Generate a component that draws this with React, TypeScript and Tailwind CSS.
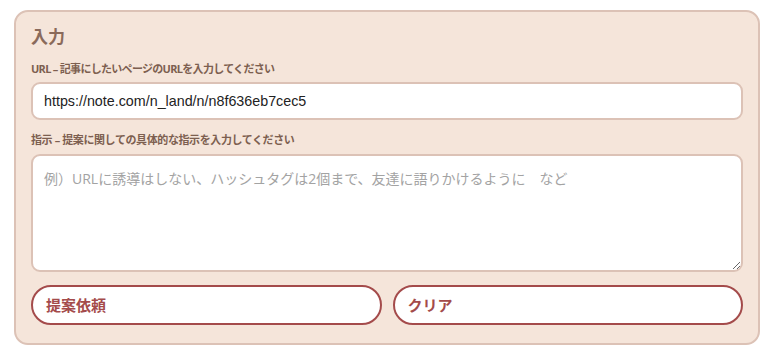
import React from "react";

const font = { fontFamily: '"Open Sans", "Noto Sans CJK JP", sans-serif' };
const inputFont = { fontFamily: '"Liberation Sans", "Noto Sans CJK JP", sans-serif' };

export default function App() {
  return (
    <div className="w-[772px] h-[352px] bg-white pt-[10px] pl-[14px]" style={font}>
      <div className="w-[746px] h-[335px] rounded-[14px] border-2 border-[#dcc2b6] bg-[#f5e5da] px-[15px] pt-[13px] flex flex-col">
        <div className="text-[17px] leading-[24px] font-bold text-[#8a6a5b]">入力</div>
        <div className="mt-[12px] text-[11px] leading-[16px] font-bold tracking-[-0.7px] text-[#7d5f50]">
          URL – 記事にしたいページのURLを入力してください
        </div>
        <input
          className="mt-[5px] h-[38px] w-full rounded-[9px] border-2 border-[#dcc2b6] bg-white px-[11px] text-[14.3px] text-[#222] outline-none"
          defaultValue="https://note.com/n_land/n/n8f636eb7cec5"
          style={inputFont}
        />
        <div className="mt-[12px] text-[11px] leading-[16px] font-bold tracking-[-0.4px] text-[#7d5f50]">
          指示 – 提案に関しての具体的な指示を入力してください
        </div>
        <textarea
          className="mt-[6px] h-[118px] w-full rounded-[9px] border-2 border-[#dcc2b6] bg-white px-[11px] py-[13px] text-[14px] leading-[20px] text-[#222] placeholder:text-[#a3a3a3] outline-none"
          placeholder="例）URLに誘導はしない、ハッシュタグは2個まで、友達に語りかけるように　など"
          style={font}
        />
        <div className="mt-[13px] flex gap-[11px]">
          <button className="h-[40px] flex-1 rounded-full border-2 border-[#a44b4b] bg-white px-[13px] text-left text-[15px] font-bold text-[#a44b4b]" style={font}>
            提案依頼
          </button>
          <button className="h-[40px] flex-1 rounded-full border-2 border-[#a44b4b] bg-white px-[13px] text-left text-[15px] font-bold text-[#a44b4b]" style={font}>
            クリア
          </button>
        </div>
      </div>
    </div>
  );
}
